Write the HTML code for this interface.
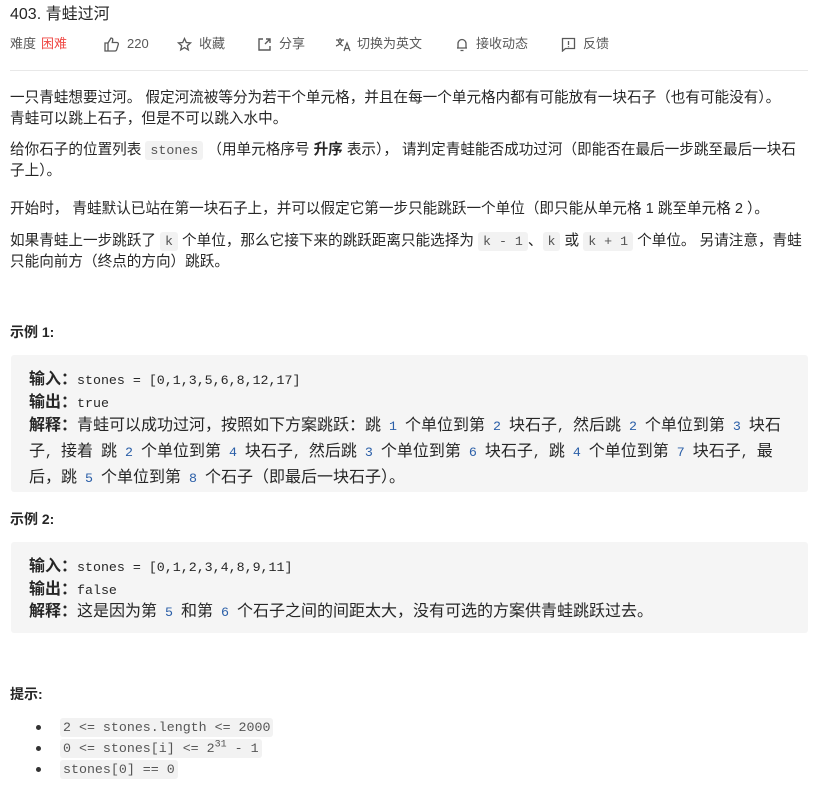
<!DOCTYPE html>
<html><head><meta charset="utf-8"><style>
*{margin:0;padding:0;box-sizing:border-box}
body{width:822px;height:792px;background:#fff;font-family:"Liberation Sans","Noto Sans CJK SC",sans-serif;color:#262626;position:relative;overflow:hidden}
.a{position:absolute;white-space:nowrap}
.t{font-size:14.6px;line-height:21px}
code,.m{font-family:"Liberation Mono","Noto Sans CJK SC",monospace;font-size:13.3px}
code{background:#f2f2f2;color:#555;padding:2px 5px;border-radius:3px}
.meta{font-size:13px;color:#595959;top:36px;line-height:16px}
.blk{position:absolute;left:11px;width:797px;background:#f5f5f5;border-radius:3px}
.cl{position:absolute;left:18px;font-size:16px;line-height:23px;white-space:nowrap;font-family:"Noto Sans CJK SC",sans-serif;color:#262626}
.cl .m{font-size:13.3px}
.cl .n{color:#2b5fa8}
.h{font-weight:bold;font-size:14px}
.li{position:absolute;left:60px;font-size:13.3px}
.dot{position:absolute;left:36px;width:5px;height:5px;border-radius:50%;background:#333}
svg{position:absolute;top:37px}
</style></head><body>
<div class="a" style="left:10px;top:5px;font-size:16px;line-height:20px;color:#262626">403. 青蛙过河</div>
<div class="a meta" style="left:10px">难度</div>
<div class="a meta" style="left:41px;color:#ef4743">困难</div>
<svg style="left:104px" width="16" height="15" viewBox="0 0 16 15" fill="none" stroke="#595959" stroke-width="1.3"><path d="M1 6h3v8H1zM4 6l3-5c1.5 0 2 1 1.7 2.3L8.3 5.5H13c1 0 1.6.9 1.3 1.9l-1.7 5.5c-.3.7-.9 1.1-1.6 1.1H4"/></svg>
<div class="a meta" style="left:127px">220</div>
<svg style="left:177px" width="15" height="15" viewBox="0 0 15 15" fill="none" stroke="#595959" stroke-width="1.3"><path d="M7.5 1.5l1.8 4 4.2.4-3.2 2.8 1 4.2-3.8-2.3-3.8 2.3 1-4.2L1.5 5.9l4.2-.4z"/></svg>
<div class="a meta" style="left:199px">收藏</div>
<svg style="left:257px" width="15" height="15" viewBox="0 0 15 15" fill="none" stroke="#595959" stroke-width="1.4"><path d="M6 2H2v11h11V9M9 2h4v4M13 2L8 7"/></svg>
<div class="a meta" style="left:279px">分享</div>
<svg style="left:335px" width="16" height="15" viewBox="0 0 16 15" fill="none" stroke="#595959" stroke-width="1.2"><path d="M1 3h8M5 1v2M3 3c1 3 3 5 5 6M7 3c-1 3-3 5-6 6M9 14l3-8 3 8M10 11.5h4"/></svg>
<div class="a meta" style="left:357px">切换为英文</div>
<svg style="left:455px" width="14" height="15" viewBox="0 0 14 15" fill="none" stroke="#595959" stroke-width="1.3"><path d="M3 11V6.5a4 4 0 018 0V11M2 11h10M5.5 13.5h3"/></svg>
<div class="a meta" style="left:476px">接收动态</div>
<svg style="left:561px" width="15" height="15" viewBox="0 0 15 15" fill="none" stroke="#595959" stroke-width="1.3"><path d="M1.5 1.5h12v10h-9l-3 2.5z M7.5 4v4M7.5 9.3v1"/></svg>
<div class="a meta" style="left:583px">反馈</div>
<div class="a" style="left:10px;top:70px;width:798px;height:1px;background:#e8e8e8"></div>

<div class="a t" style="left:10px;top:88px">一只青蛙想要过河。 假定河流被等分为若干个单元格，并且在每一个单元格内都有可能放有一块石子（也有可能没有）。<br>青蛙可以跳上石子，但是不可以跳入水中。</div>
<div class="a t" style="left:10px;top:140px">给你石子的位置列表 <code>stones</code> （用单元格序号 <b>升序</b> 表示）， 请判定青蛙能否成功过河（即能否在最后一步跳至最后一块石<br>子上）。</div>
<div class="a t" style="left:10px;top:199px">开始时， 青蛙默认已站在第一块石子上，并可以假定它第一步只能跳跃一个单位（即只能从单元格 1 跳至单元格 2 ）。</div>
<div class="a t" style="left:10px;top:231px">如果青蛙上一步跳跃了 <code>k</code> 个单位，那么它接下来的跳跃距离只能选择为 <code>k - 1</code>、<code>k</code> 或 <code>k + 1</code> 个单位。 另请注意，青蛙<br>只能向前方（终点的方向）跳跃。</div>

<div class="a h" style="left:10px;top:322px">示例 1:</div>
<div class="blk" style="top:355px;height:137px">
<div class="cl" style="top:11px"><b>输入：</b><span class="m">stones = [0,1,3,5,6,8,12,17]</span></div>
<div class="cl" style="top:34px"><b>输出：</b><span class="m">true</span></div>
<div class="cl" style="top:57px"><b>解释：</b>青蛙可以成功过河，按照如下方案跳跃：跳<span class="m"> <span class="n">1</span> </span>个单位到第<span class="m"> <span class="n">2</span> </span>块石子<span class="m">, </span>然后跳<span class="m"> <span class="n">2</span> </span>个单位到第<span class="m"> <span class="n">3</span> </span>块石<br>子<span class="m">, </span>接着<span class="m"> </span>跳<span class="m"> <span class="n">2</span> </span>个单位到第<span class="m"> <span class="n">4</span> </span>块石子<span class="m">, </span>然后跳<span class="m"> <span class="n">3</span> </span>个单位到第<span class="m"> <span class="n">6</span> </span>块石子<span class="m">, </span>跳<span class="m"> <span class="n">4</span> </span>个单位到第<span class="m"> <span class="n">7</span> </span>块石子<span class="m">, </span>最<br>后，跳<span class="m"> <span class="n">5</span> </span>个单位到第<span class="m"> <span class="n">8</span> </span>个石子（即最后一块石子）。</div>
</div>

<div class="a h" style="left:10px;top:509px">示例 2:</div>
<div class="blk" style="top:542px;height:91px">
<div class="cl" style="top:11px"><b>输入：</b><span class="m">stones = [0,1,2,3,4,8,9,11]</span></div>
<div class="cl" style="top:34px"><b>输出：</b><span class="m">false</span></div>
<div class="cl" style="top:56px"><b>解释：</b>这是因为第<span class="m"> <span class="n">5</span> </span>和第<span class="m"> <span class="n">6</span> </span>个石子之间的间距太大，没有可选的方案供青蛙跳跃过去。</div>
</div>

<div class="a h" style="left:10px;top:684px">提示:</div>
<div class="dot" style="top:725px"></div>
<div class="dot" style="top:746px"></div>
<div class="dot" style="top:767px"></div>
<div class="a li" style="top:719px"><code style="padding:2px 3px">2 &lt;= stones.length &lt;= 2000</code></div>
<div class="a li" style="top:740px"><code style="padding:2px 3px">0 &lt;= stones[i] &lt;= 2<sup style="font-size:10px">31</sup> - 1</code></div>
<div class="a li" style="top:761px"><code style="padding:2px 3px">stones[0] == 0</code></div>
</body></html>
